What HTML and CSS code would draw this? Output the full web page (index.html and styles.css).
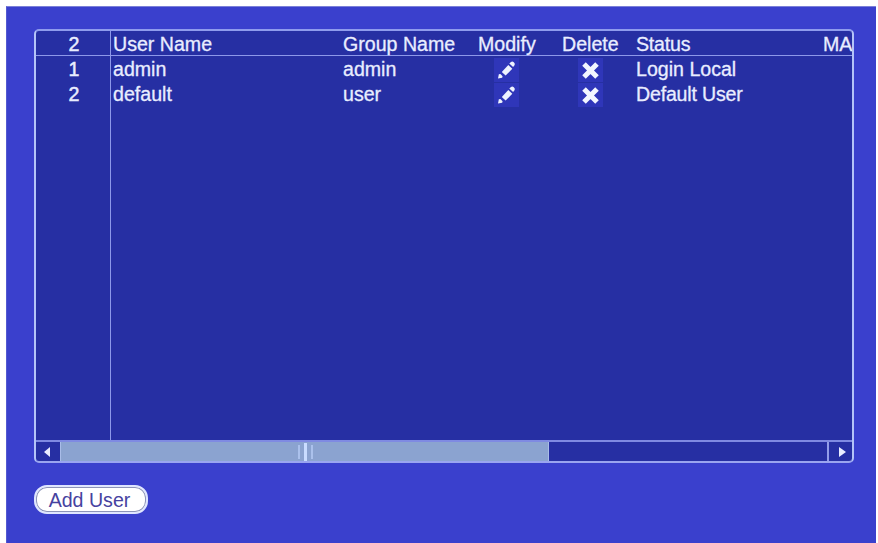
FILE: index.html
```html
<!DOCTYPE html>
<html lang="en">
<head>
    <title>User Account</title>
    <meta charset="utf-8">
    <meta name="viewport" content="width=device-width, initial-scale=1">
    <link rel="stylesheet" href="styles.css">
</head>

<body>
    <svg class="symbols" width="0" height="0">
        <symbol id="pencil" viewBox="0 0 24 24">
            <path d="M3.500 20.500l.8-4.200 1.600-.2 2.200 2.200-.4 1.500z"/>
            <path d="M7.300 14l6.500-7 4 3.800-6.700 6.800z"/>
            <path d="M14.800 5.600l1.700-1.700q1.400-.9 2.800.3t.9 2.800l-1.600 1.900z"/>
        </symbol>
        <symbol id="cross" viewBox="0 0 24 24">
            <path d="M5.500 6l13 13M18.500 6L5.500 19"/>
        </symbol>
    </svg>

    <main class="panel">
        <div class="list">
            <div class="grid">
                <div class="row head">
                    <span class="num">2</span>
                    <span>User Name</span>
                    <span>Group Name</span>
                    <span>Modify</span>
                    <span>Delete</span>
                    <span class="status">Status</span>
                    <span class="mac">MA</span>
                </div>
                <div class="row">
                    <span class="num">1</span>
                    <span>admin</span>
                    <span>admin</span>
                    <span class="icon"><svg class="pencil"><use href="#pencil"/></svg></span>
                    <span class="icon"><svg class="cross"><use href="#cross"/></svg></span>
                    <span>Login Local</span>
                </div>
                <div class="row">
                    <span class="num">2</span>
                    <span>default</span>
                    <span>user</span>
                    <span class="icon"><svg class="pencil"><use href="#pencil"/></svg></span>
                    <span class="icon"><svg class="cross"><use href="#cross"/></svg></span>
                    <span class="status">Default User</span>
                </div>
                <div class="row filler">
                    <span class="num"></span>
                </div>
            </div>
            <div class="scrollbar">
                <div class="arrow left"><svg width="6" height="10" viewBox="0 0 6 10"><path d="M6 0v10L0 5z"/></svg></div>
                <div class="track">
                    <div class="thumb"><i></i><i class="mid"></i><i></i></div>
                </div>
                <div class="arrow right"><svg width="7" height="10" viewBox="0 0 7 10"><path d="M0 0v10l7-5z"/></svg></div>
            </div>
        </div>
        <button class="add">Add User</button>
    </main>
</body>
</html>
```
FILE: styles.css
```css
:root {
    --panel: #3a40cd;
    --list: #262fa3;
    --line: #8d98ea;
    --edge: #b4c4f8;
    --font: #e9edff;
}

* {
    box-sizing: border-box;
}
body {
    margin: 0;
    height: 543px;
    padding: 6px 2px 0 6px;
    overflow: hidden;
    background-color: #fff;
    font-family: "Liberation Sans", Arial, sans-serif;
    font-size: 19.6px;
    color: var(--font);
}
.symbols {
    position: absolute;
}
.panel {
    height: 537px;
    padding: 22px 22px 0 27px;
    background-color: var(--panel);
    border-top: 1px solid #7b80d8;
    border-left: 1px solid #5359d0;
}

/* list */
.list {
    display: flex;
    flex-direction: column;
    width: 820px;
    height: 434px;
    background-color: var(--list);
    border: 2px solid var(--edge);
    border-top-color: #8f9ced;
    border-bottom-color: #9aa5f0;
    border-radius: 5px;
    overflow: hidden;
}
.grid {
    flex: 1;
    display: flex;
    flex-direction: column;
    overflow: hidden;
}
.row {
    display: grid;
    grid-template-columns: 75px 230px 135px 84px 74px 187px 40px;
    height: 25px;
    line-height: 26px;
    white-space: nowrap;
    -webkit-text-stroke: 0.3px var(--font);
}
.row > span {
    padding-left: 2px;
}
.row > .num {
    padding: 0 0 0 2px;
    text-align: center;
    border-right: 1px solid var(--line);
    -webkit-text-stroke-width: 0.5px;
}
.row > .status {
    letter-spacing: -0.2px;
}
.row > .icon {
    display: flex;
    align-items: center;
    padding: 1px 0 0 18px;
}
.head {
    border-bottom: 1px solid var(--line);
}
.filler {
    flex: 1;
}
.icon svg {
    width: 25px;
    height: 24px;
    background-color: #2f36b9;
    fill: #eef3ff;
    stroke: none;
}
.icon .cross {
    fill: none;
    stroke: #f2f6ff;
    stroke-width: 5;
}

/* scrollbar */
.scrollbar {
    display: flex;
    height: 21px;
    border-top: 2px solid #7f8ae2;
}
.arrow {
    display: flex;
    align-items: center;
    justify-content: center;
    width: 24px;
    fill: var(--font);
}
.left {
    padding-right: 3px;
}
.right {
    width: 25px;
    padding-left: 3px;
    border-left: 2px solid #929de9;
}
.track {
    flex: 1;
}
.thumb {
    display: flex;
    align-items: center;
    justify-content: center;
    gap: 4px;
    width: 489px;
    height: 100%;
    padding-left: 2px;
    background-color: #8ba3d0;
    border-left: 1px solid #a9bce8;
    border-right: 1px solid #a9bce8;
}
.thumb i {
    width: 2px;
    height: 14px;
    background-color: #abc1ec;
}
.thumb .mid {
    width: 3px;
    height: 18px;
    background-color: #c9dcff;
}

/* button */
.add {
    display: block;
    width: 114px;
    height: 29px;
    margin: 22px 0 0;
    padding: 0 3px 0 0;
    border: 2px solid #dfe6ff;
    border-radius: 13px;
    background-color: #fff;
    box-shadow: inset 0 0 0 1px #8c94b8;
    font: inherit;
    line-height: 24px;
    color: #4642a0;
}
```
